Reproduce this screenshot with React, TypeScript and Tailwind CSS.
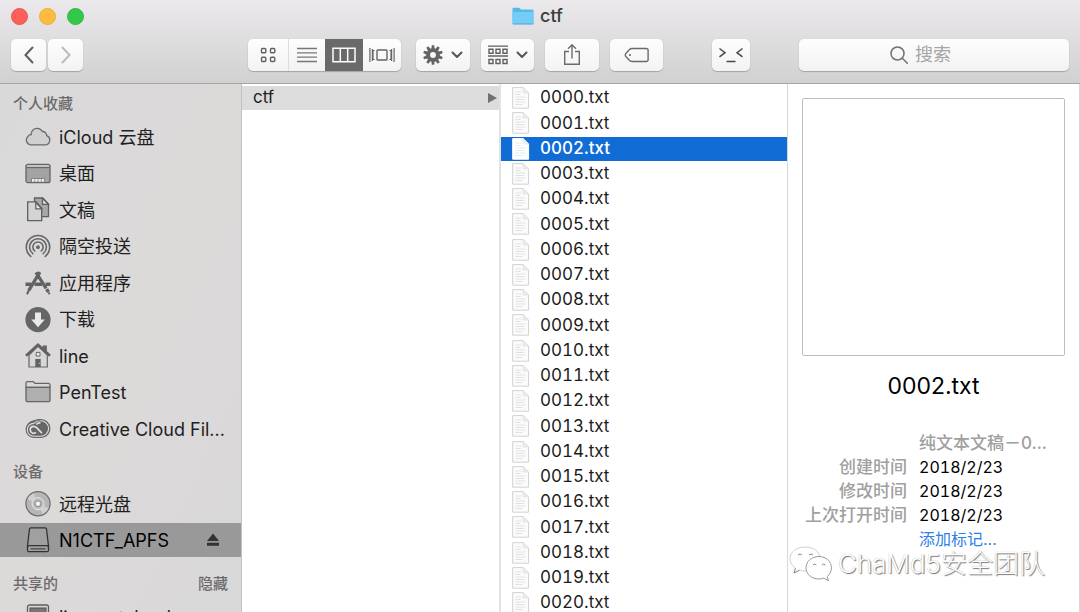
import type { ReactNode } from "react";

const FILES = Array.from({ length: 21 }, (_, i) => String(i).padStart(4, "0") + ".txt");

const SANS = "font-['Inter','Noto_Sans_CJK_SC',sans-serif]";

function CloudIcon() {
  return (
    <svg width="26" height="26" viewBox="0 0 26 26" fill="none" stroke="#6b6b6b" strokeWidth="1.3">
      <path d="M5.600 20.800h14.600a4.700 4.700 0 0 0 1.500-9.100 4.100 4.100 0 0 0-4.300-4.200A5.900 5.900 0 0 0 6.600 8.300c-.4.800-.5 1.500-.4 2.400C4.400 10.600 3.400 11.500 3 12.600A4.700 4.700 0 0 0 5.600 20.800z" fill="#d0d0d0" />
    </svg>
  );
}

function DesktopIcon() {
  return (
    <svg width="26" height="26" viewBox="0 0 26 26">
      <rect x="1" y="3.3" width="24" height="18.4" rx="2" fill="#a3a3a3" stroke="#666" strokeWidth="1.3" />
      <path d="M2 5h22" stroke="#ccc" strokeWidth="1.6" />
      <path d="M1.6 6.600h22.8" stroke="#666" strokeWidth="1.100" />
      <path d="M6.200 17.300h13.600v4H6.200z" fill="#777" />
      <path d="M7 18h2.500v2.800H7zM10.200 18h2.500v2.800h-2.500zM13.400 18h2.500v2.800h-2.500zM16.600 18h2.500v2.800h-2.500z" fill="#f0f0f0" />
    </svg>
  );
}

function DocumentsIcon() {
  return (
    <svg width="26" height="26" viewBox="0 0 26 26" stroke="#606060" strokeWidth="1.3">
      <path d="M9.500 1h8.300l5.700 6v12.600h-14z" fill="#a8a8a8" />
      <path d="M17.500 1.300v6h5.800z" fill="#e2e2e2" />
      <path d="M2.700 4.900h8.500l5.500 6.400v12.400h-14z" fill="#d4d4d4" />
      <path d="M10.800 5.300v6.500h5.800z" fill="#ececec" />
    </svg>
  );
}

function AirDropIcon() {
  return (
    <svg width="26" height="26" viewBox="0 0 26 26" fill="none" stroke="#666" strokeWidth="1.6" strokeLinecap="round">
      <path d="M5.8 22.4a11.7 11.7 0 1 1 14.4 0" />
      <path d="M7.8 19.7a8.4 8.4 0 1 1 10.4 0" />
      <path d="M9.8 17a5.1 5.1 0 1 1 6.4 0" />
      <circle cx="13" cy="13.2" r="1.9" fill="#666" stroke="none" />
    </svg>
  );
}

function AppsIcon() {
  return (
    <svg width="26" height="26" viewBox="0 0 26 26" fill="none" stroke="#626262">
      <path d="M.5 14.300h5.800M9.500 14.300h7.500M20.600 14.300h4.900" strokeWidth="3.400" />
      <path d="M14.900 2.200 3.800 20.400" strokeWidth="3.200" />
      <path d="M3.900 20.200 2 24.200" strokeWidth="2" />
      <path d="M11 2.400 21.100 18.400" strokeWidth="3.200" />
      <path d="M21.600 19.200l1.900 3" strokeWidth="3.400" />
      <path d="M23.700 22.600l.9 1.600" strokeWidth="2" />
    </svg>
  );
}

function DownloadsIcon() {
  return (
    <svg width="26" height="26" viewBox="0 0 26 26">
      <circle cx="13" cy="12.700" r="12.600" fill="#666" />
      <path d="M10 5.500h6v7h3.800L13 20.300 6.200 12.500H10z" fill="#ebe8e8" />
    </svg>
  );
}

function HomeIcon() {
  return (
    <svg width="26" height="26" viewBox="0 0 26 26">
      <path d="M4 12v12h18.300V12L13 3z" fill="#d8d6d6" stroke="#666" strokeWidth="1.200" />
      <path d="M17.600 2.500h4.300v7l-4.300-4z" fill="#666" />
      <path d="M1 12.700 13 1.900l12 10.800" fill="none" stroke="#626262" strokeWidth="2.700" />
      <path d="M11.200 9.400H15v3.600h-3.800z" fill="#eee" stroke="#666" strokeWidth="1" />
      <path d="M10.300 16h5.400v8h-5.400z" fill="#626262" />
      <circle cx="14.300" cy="20.200" r=".6" fill="#ccc" />
    </svg>
  );
}

function FolderIcon() {
  return (
    <svg width="26" height="26" viewBox="0 0 26 26" stroke="#666" strokeWidth="1.300">
      <path d="M1 7.500v-4.300A1.500 1.500 0 0 1 2.500 1.700h5.700l1.900 1.700h13.400A1.500 1.500 0 0 1 25 4.900v2.600z" fill="#dad8d8" />
      <path d="M1 7.300h24v12.900a1.500 1.500 0 0 1-1.500 1.500h-21A1.500 1.500 0 0 1 1 20.200z" fill="#b0afaf" />
    </svg>
  );
}

function CreativeCloudIcon() {
  return (
    <svg width="26" height="26" viewBox="0 0 26 26" fill="none">
      <path d="M8 4.600C10 3.500 13 3 15.500 3a9.500 9.500 0 0 1 9.900 9.400c0 5.600-4.400 9.500-9.900 9.500H8.600A8.400 8.400 0 0 1 .6 13.700C.6 9.600 3.500 5.800 8 4.600z" fill="#666" />
      <path d="M8.800 7.400C10.600 5.600 13 4.800 15.300 4.800a7.900 7.900 0 0 1 8.300 7.700 7.900 7.900 0 0 1-8.100 7.700H8.700a6.400 6.400 0 0 1-6.400-6.500 6.300 6.300 0 0 1 6.500-6.300" stroke="#e2dfdf" strokeWidth="1.100" />
      <path d="M8.700 10.300a3.600 3.600 0 0 0-3.500 3.600 3.500 3.500 0 0 0 5.800 2.500M8.700 10.300c1.200 0 2 .5 2.900 1.400l5.300 5.400M11.300 8.300a5.600 5.600 0 0 1 4.200-1.400" stroke="#e2dfdf" strokeWidth="1.700" />
    </svg>
  );
}

function DiscIcon() {
  return (
    <svg width="26" height="26" viewBox="0 0 26 26">
      <circle cx="13" cy="12.700" r="12.100" fill="#b6b6b6" stroke="#6b6b6b" strokeWidth="1.200" />
      <path d="M13 12.700 2.500 8.200A11.400 11.400 0 0 1 8.500 2.200zM13 12.700l10.500 4.500a11.400 11.400 0 0 1-6 6z" fill="#d0d0d0" />
      <circle cx="13" cy="12.700" r="6" fill="#bdbdbd" stroke="#e6e6e6" strokeWidth="1" />
      <circle cx="13" cy="12.700" r="3" fill="#ddd" stroke="#8a8a8a" strokeWidth="1" />
      <circle cx="13" cy="12.700" r="1.400" fill="#fff" />
    </svg>
  );
}

function DriveIcon() {
  return (
    <svg width="26" height="26" viewBox="0 0 26 26" stroke="#333" strokeWidth="1.300" strokeLinejoin="round">
      <path d="M6 .8h14a1.500 1.500 0 0 1 1.500 1.200l2 17v4.200a1.500 1.500 0 0 1-1.500 1.500H4a1.500 1.500 0 0 1-1.500-1.500V19l2-17A1.500 1.500 0 0 1 6 .8z" fill="#a0a0a0" />
      <path d="M2.700 20.200A1.500 1.500 0 0 1 4.200 18.700h17.600a1.500 1.500 0 0 1 1.500 1.500" fill="none" />
      <path d="M5.500 21.900h15" strokeWidth="1" />
    </svg>
  );
}

function ComputerIcon() {
  return (
    <svg width="26" height="26" viewBox="0 0 26 26">
      <rect x="2.500" y="1" width="21" height="18" rx="2" fill="#d5d5d5" stroke="#5f5f5f" strokeWidth="1.300" />
      <rect x="5" y="4" width="16" height="12" fill="#777" stroke="#555" />
    </svg>
  );
}

function FileIcon({ selected }: { selected: boolean }) {
  const line = selected ? "#e4ebf2" : "#e2e2e2";
  return (
    <svg width="18" height="22" viewBox="0 0 18 22" className="shrink-0">
      <path d="M.7.600h10.300l5.600 5.400v15.200H.700z" fill={selected ? "#fff" : "#fbfbfb"} stroke={selected ? "#fff" : "#d2d2d2"} strokeWidth="1" />
      <path d="M11 .6v5.400h5.600z" fill={selected ? "#eef3f8" : "#ececec"} stroke={line} strokeWidth=".8" />
      <path d="M3.500 5h5.500M3.500 7.500h5M3.500 10h10M3.500 12.500h9M3.500 15h10M3.500 17.500h7" stroke={line} strokeWidth="1" />
    </svg>
  );
}

function Chevron() {
  return (
    <svg width="12" height="8" viewBox="0 0 12 8" fill="none" stroke="#555" strokeWidth="2" strokeLinecap="round" strokeLinejoin="round">
      <path d="m1.500 1.500 4.500 4.500 4.500-4.500" />
    </svg>
  );
}

const GEAR_TEETH = [0, 36, 72, 108, 144, 180, 216, 252, 288, 324];

function GearIcon() {
  return (
    <svg width="20" height="20" viewBox="-10 -10 20 20">
      {GEAR_TEETH.map((a) => (
        <path key={a} d="M-1.700-5.500-1.200-9.800h2.400l.5 4.300z" fill="#646464" transform={`rotate(${a})`} />
      ))}
      <circle r="4.900" fill="none" stroke="#646464" strokeWidth="3.900" />
    </svg>
  );
}

const BTN =
  "flex h-8 items-center justify-center rounded-[5px] bg-linear-to-b from-[#fdfdfd] to-[#f3f3f3] shadow-[0_1px_1px_rgba(0,0,0,0.22),0_0_1px_rgba(0,0,0,0.15)]";

function ToolButton({ label, className, children }: { label: string; className: string; children: ReactNode }) {
  return (
    <button type="button" aria-label={label} className={`${BTN} ${className}`}>
      {children}
    </button>
  );
}

function Toolbar() {
  return (
    <header className="shrink-0 border-b border-[#a4a4a4] bg-linear-to-b from-[#ebe9eb] to-[#d2d1d2]">
      <div className="relative flex h-8 items-center px-[11px]">
        <div className="flex gap-[11px]">
          <button type="button" aria-label="关闭" className="size-[17px] rounded-full border border-[#ee5350] bg-[#fc605b]" />
          <button type="button" aria-label="最小化" className="size-[17px] rounded-full border border-[#eaae3a] bg-[#fdbc40]" />
          <button type="button" aria-label="缩放" className="size-[17px] rounded-full border border-[#2cba41] bg-[#34c84a]" />
        </div>
        <div className="absolute inset-x-0 flex items-center justify-center gap-[6px] pr-[5px]">
          <svg width="22" height="18" viewBox="0 0 22 18">
            <path d="M.5 2a1.300 1.300 0 0 1 1.300-1.300h5.500L9 2.500h11.200A1.300 1.300 0 0 1 21.500 3.800v12.400a1 1 0 0 1-1 1h-19a1 1 0 0 1-1-1z" fill="#59b9e6" />
            <path d="M.5 5h21v11.200a1 1 0 0 1-1 1h-19a1 1 0 0 1-1-1z" fill="#74cdf6" />
            <path d="M.8 16.900h20.400" stroke="#55aedb" strokeWidth="1" />
          </svg>
          <h1 className="text-[18px] leading-6 font-medium text-[#3c3c3c]">ctf</h1>
        </div>
      </div>
      <div className="flex h-[51px] items-start px-[11px] pt-[7px]">
        <div className="flex gap-[2px]">
          <ToolButton label="后退" className="w-[35px]">
            <svg width="10" height="18" viewBox="0 0 10 18" fill="none" stroke="#5f5f5f" strokeWidth="2" strokeLinecap="round"><path d="M8.500 1.500 1.500 9l7 7.500" /></svg>
          </ToolButton>
          <ToolButton label="前进" className="w-[35px]">
            <svg width="10" height="18" viewBox="0 0 10 18" fill="none" stroke="#bcbcbc" strokeWidth="2" strokeLinecap="round"><path d="m1.500 1.500 7 7.500-7 7.500" /></svg>
          </ToolButton>
        </div>
        <div className={`${BTN} ml-[165px] overflow-hidden`}>
          <button type="button" aria-label="图标" className="flex h-8 w-[41px] items-center justify-center border-r border-[#dcdcdc]">
            <svg width="16" height="16" viewBox="0 0 16 16" fill="none" stroke="#606060" strokeWidth="1.400">
              <rect x="1.500" y="1.500" width="4.300" height="4.300" rx="1" /><rect x="10.500" y="1.500" width="4.300" height="4.300" rx="1" />
              <rect x="1.500" y="10.200" width="4.300" height="4.300" rx="1" /><rect x="10.500" y="10.200" width="4.300" height="4.300" rx="1" />
            </svg>
          </button>
          <button type="button" aria-label="列表" className="flex h-8 w-9 items-center justify-center">
            <svg width="20" height="16" viewBox="0 0 20 16" stroke="#777" strokeWidth="1.300"><path d="M0 1.500h20M0 5.800h20M0 10.200h20M0 14.500h20" /></svg>
          </button>
          <button type="button" aria-label="分栏" className="flex h-8 w-[38px] items-center justify-center bg-[#6a6a6a]">
            <svg width="24" height="16" viewBox="0 0 24 16" fill="none" stroke="#fff" strokeWidth="1.500"><path d="M1 1.200h22v13.600H1zM8.300 1.200v13.600M15.700 1.200v13.600" /></svg>
          </button>
          <button type="button" aria-label="Cover Flow" className="flex h-8 w-[38px] items-center justify-center">
            <svg width="26" height="16" viewBox="0 0 26 16" fill="none" stroke="#666" strokeWidth="1.400">
              <rect x="8" y="3" width="10" height="10" rx=".8" />
              <path d="M.9 1v14M25.100 1v14M3.400 2v12M22.600 2v12M5.600 3.500H4v9h1.600M20.400 3.500H22v9h-1.600" strokeWidth="1.200" />
            </svg>
          </button>
        </div>
        <ToolButton label="操作" className="ml-[15px] w-[54px] gap-2"><GearIcon /><Chevron /></ToolButton>
        <ToolButton label="排列" className="ml-[11px] w-[53px] gap-2">
          <svg width="20" height="20" viewBox="0 0 20 20" fill="none" stroke="#606060" strokeWidth="1.400">
            <path d="M0 1.200h20M0 11h20" strokeWidth="1.300" />
            <path d="M1 4.300h4v4H1zM8 4.300h4v4H8zM15 4.300h4v4h-4zM1 14.500h4v4H1zM8 14.500h4v4H8zM15 14.500h4v4h-4z" />
          </svg>
          <Chevron />
        </ToolButton>
        <ToolButton label="共享" className="ml-[11px] w-[54px]">
          <svg width="18" height="22" viewBox="0 0 18 22" fill="none" stroke="#6a6a6a" strokeWidth="1.400">
            <path d="M6 7.500H1.700v12.800h14.600V7.500H12M9 14.500V1M5 4.800l4-4 4 4" />
          </svg>
        </ToolButton>
        <ToolButton label="标记" className="ml-[11px] w-[53px]">
          <svg width="26" height="16" viewBox="0 0 26 16" fill="none" stroke="#6a6a6a" strokeWidth="1.400">
            <path d="M8 1.500h14.300a1.800 1.800 0 0 1 1.800 1.800v9.400a1.800 1.800 0 0 1-1.800 1.800H8a4 4 0 0 1-2.500-1L2.100 9.800a2.400 2.400 0 0 1 0-3.600l3.400-3.700a4 4 0 0 1 2.500-1z" /><circle cx="6" cy="8" r="1.100" fill="#6a6a6a" stroke="none" />
          </svg>
        </ToolButton>
        <ToolButton label="终端" className="ml-[49px] w-[38px]">
          <svg width="26" height="18" viewBox="0 0 26 18" fill="none" stroke="#4a4a4a" strokeWidth="1.500">
            <path d="m1.500 2.500 5.500 4.200-5.500 4.200M24.500 2.500 19 6.700l5.500 4.200M8.500 15.500h9" />
          </svg>
        </ToolButton>
        <label className={`${BTN} ml-[49px] min-w-0 flex-1 gap-[7px] pr-[25px]`}>
          <svg width="18" height="18" viewBox="0 0 18 18" fill="none" stroke="#707070" strokeWidth="1.500" strokeLinecap="round"><circle cx="7.500" cy="7.500" r="6.500" /><path d="m12.300 12.300 5 5" /></svg>
          <input type="text" aria-label="搜索" placeholder="搜索" className="w-[38px] bg-transparent text-[18px] leading-6 outline-none placeholder:text-[#a5a5a5]" />
        </label>
      </div>
    </header>
  );
}

function SidebarItem({ icon, children }: { icon: ReactNode; children: ReactNode }) {
  return (
    <li>
      <a href="#" className="flex h-[34px] items-center gap-2 pl-[25px] text-[18px] whitespace-nowrap text-[#1f1f1f]">
        {icon}
        <span>{children}</span>
      </a>
    </li>
  );
}

function Sidebar() {
  return (
    <nav className="w-[242px] shrink-0 overflow-hidden border-r border-[#c3c3c5] bg-linear-to-br from-[#dad9da] via-[#dcd9d9] to-[#d9d8d8] pt-2">
      <h2 className="px-[13px] text-[15px] leading-6 font-medium text-[#6c6b6c]">个人收藏</h2>
      <ul className="mt-1 flex h-[326px] flex-col justify-between">
        <SidebarItem icon={<CloudIcon />}>iCloud 云盘</SidebarItem>
        <SidebarItem icon={<DesktopIcon />}>桌面</SidebarItem>
        <SidebarItem icon={<DocumentsIcon />}>文稿</SidebarItem>
        <SidebarItem icon={<AirDropIcon />}>隔空投送</SidebarItem>
        <SidebarItem icon={<AppsIcon />}>应用程序</SidebarItem>
        <SidebarItem icon={<DownloadsIcon />}>下载</SidebarItem>
        <SidebarItem icon={<HomeIcon />}>line</SidebarItem>
        <SidebarItem icon={<FolderIcon />}>PenTest</SidebarItem>
        <SidebarItem icon={<CreativeCloudIcon />}>Creative Cloud Fil...</SidebarItem>
      </ul>
      <h2 className="mt-[14px] px-[13px] text-[15px] leading-6 font-medium text-[#6c6b6c]">设备</h2>
      <ul className="mt-[3px]">
        <SidebarItem icon={<DiscIcon />}>远程光盘</SidebarItem>
        <li className="mt-[2px] flex h-[34px] items-center justify-between bg-[#9a999a] pr-[22px] pl-[25px]">
          <a href="#" className="flex items-center gap-2 text-[18px] text-black">
            <DriveIcon />N1CTF_APFS
          </a>
          <button type="button" aria-label="推出">
            <svg width="12" height="14" viewBox="0 0 12 14" fill="#333"><path d="M6 .5 12 8H0zM0 9.800h12v3H0z" /></svg>
          </button>
        </li>
      </ul>
      <div className="mt-[15px] flex justify-between px-[13px] text-[15px] leading-6 font-medium text-[#6c6b6c]">
        <h2>共享的</h2>
        <button type="button">隐藏</button>
      </div>
      <ul className="mt-1">
        <SidebarItem icon={<ComputerIcon />}>line-netcloud</SidebarItem>
      </ul>
    </nav>
  );
}

function FileColumn() {
  return (
    <ul className="flex h-[531px] flex-col justify-between pt-[2px]">
      {FILES.map((name) => {
        const selected = name === "0002.txt";
        return (
          <li key={name}>
            <a
              href="#"
              className={`flex h-6 items-center gap-[10px] pl-[11px] text-[17px] tabular-nums ${selected ? "bg-[#116cd6] font-medium text-white" : "text-[#1c1c1c]"}`}
            >
              <FileIcon selected={selected} />
              {name}
            </a>
          </li>
        );
      })}
    </ul>
  );
}

const DATES: [string, string][] = [
  ["创建时间", "2018/2/23"],
  ["修改时间", "2018/2/23"],
  ["上次打开时间", "2018/2/23"],
];

function Preview() {
  return (
    <section className="relative min-w-0 flex-1 border-r border-[#d8d8d8] px-[14px] pt-[14px]">
      <div className="h-[258px] rounded-[2px] border border-[#bdbdbd] bg-white" />
      <h2 className="mt-[14px] text-center text-[23px] leading-8 text-black">0002.txt</h2>
      <dl className="mt-[29px] grid grid-cols-[105px_1fr] gap-x-3 text-[16px] leading-6 whitespace-nowrap">
        <dt />
        <dd className="text-[17px] leading-6 font-medium text-[#a0a0a0]">纯文本文稿－0...</dd>
        {DATES.map(([k, v]) => (
          <div key={k} className="contents">
            <dt className="text-right text-[17px] leading-6 font-medium text-[#a0a0a0]">{k}</dt>
            <dd className="text-black tabular-nums">{v}</dd>
          </div>
        ))}
        <dt />
        <dd><a href="#" className="text-[#2f80ea]">添加标记...</a></dd>
      </dl>
      <div className="absolute top-[462px] left-px flex items-center gap-[6px] whitespace-nowrap">
        <svg width="43" height="36" viewBox="0 0 43 36" fill="#fff" stroke="#bcbcbc" strokeWidth="1">
          <path d="M16 1C7.500 1 1 6 1 12.500c0 4 2 7.300 5.500 9.600L5 27l5.500-2.800c2 .6 4 .8 6 .8C25 25 31 19.500 31 12.500S24.500 1 16 1z" stroke="#d0d0d0" />
          <path d="M6.500 22.100 5 27l5.500-2.800" stroke="#888" />
          <path d="M30 10.500c-7.500 0-13 5-13 11.300S22.500 33 30 33c1.700 0 3.300-.3 4.800-.8l4.700 2.500-1.300-4.200c2.600-2 4.200-5 4.200-8.700 0-6.300-5.200-11.300-12.400-11.300z" stroke="#999" />
          <path d="M9 9q2-2 4 0M20 9q2-2 4 0M24 19q1.500-2 3.400 0M33 19q1.500-2 3.400 0" fill="none" stroke="#888" />
        </svg>
        <span className="text-[26px] leading-9 font-light text-white [text-shadow:1px_1px_1px_#777,0_0_1px_#aaa]">ChaMd5安全团队</span>
      </div>
    </section>
  );
}

export default function App() {
  return (
    <main className={`${SANS} flex h-screen flex-col overflow-hidden bg-white`}>
      <Toolbar />
      <div className="flex min-h-0 flex-1">
        <Sidebar />
        <div className="w-[259px] shrink-0 border-r-2 border-[#e2e2e2] pt-[2px]">
          <a href="#" className="flex h-6 items-center justify-between bg-[#dcdcdc] pr-[2px] pl-[11px] text-[17px] text-[#222]">
            ctf
            <svg width="9" height="10" viewBox="0 0 9 10" fill="#707070"><path d="M0 0l9 5-9 5z" /></svg>
          </a>
        </div>
        <div className="w-[287px] shrink-0 overflow-hidden border-r border-[#d8d8d8]">
          <FileColumn />
        </div>
        <Preview />
      </div>
    </main>
  );
}
